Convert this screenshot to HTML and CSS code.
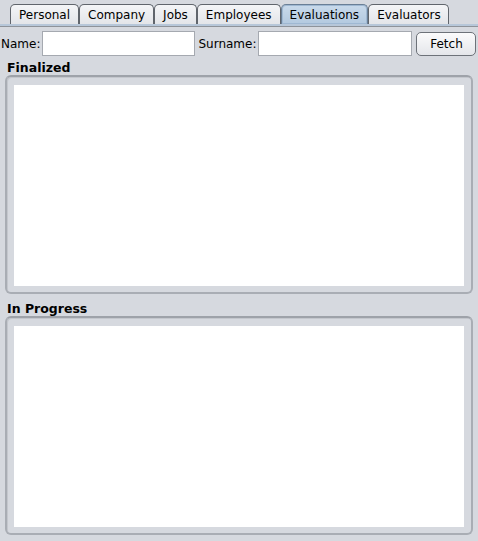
FILE: index.html
```
<!DOCTYPE html>
<html>
<head>
<meta charset="utf-8">
<link rel="stylesheet" href="styles.css">
</head>
<body>
<div class="tabs">
  <div class="tab">Personal</div>
  <div class="tab">Company</div>
  <div class="tab">Jobs</div>
  <div class="tab">Employees</div>
  <div class="tab selected">Evaluations</div>
  <div class="tab">Evaluators</div>
</div>
<div class="content">
  <div class="search">
    <span class="lbl">Name:</span>
    <input class="field name" type="text">
    <span class="lbl surname-lbl">Surname:</span>
    <input class="field surname" type="text">
    <button class="btn">Fetch</button>
  </div>
  <div class="section-title">Finalized</div>
  <div class="panel"><div class="list"></div></div>
  <div class="section-title second">In Progress</div>
  <div class="panel"><div class="list"></div></div>
</div>
</body>
</html>
```
FILE: styles.css
```
html, body {
  margin: 0;
  padding: 0;
  background: #d6d9df;
  font-family: "DejaVu Sans", sans-serif;
  font-size: 12px;
  color: #000;
  width: 478px;
  height: 541px;
  overflow: hidden;
}
.tabs {
  display: flex;
  padding: 4px 0 0 10px;
  gap: 0;
  border-bottom: 2px solid #b7c7d9;
  box-shadow: 0 1px 0 #8e939a;
}
.tab {
  height: 20px;
  box-sizing: border-box;
  padding: 0 8px;
  border: 1px solid #60656c;
  border-bottom: none;
  border-radius: 5px 5px 0 0;
  background: linear-gradient(#f4f5f7, #e3e5e9);
  line-height: 20px;
  display: flex;
  align-items: center;
}
.tab.selected {
  background: linear-gradient(#c9daeb, #b3c9df);
  border-color: #6a7f96;
  box-shadow: inset 0 0 0 1px #9fb8d2;
}
.tab:last-child {
  padding-right: 7px;
}
.content {
  padding: 5px 0 0 0;
}
.search {
  display: flex;
  align-items: center;
  height: 25px;
}
.lbl {
  padding-left: 1px;
  margin-right: 2px;
}
.surname-lbl {
  margin-left: 2px;
}
.field {
  box-sizing: border-box;
  height: 25px;
  border: 1px solid #a5a9b0;
  background: #fff;
  margin: 0;
  padding: 0 3px;
  font: inherit;
}
.field.name { width: 153px; }
.field.surname { width: 154px; }
.btn {
  box-sizing: border-box;
  margin-left: 4px;
  width: 60px;
  height: 24px;
  border: 1px solid #6d7279;
  border-radius: 5px;
  background: linear-gradient(#fbfbfc, #e4e6ea);
  font: inherit;
  padding: 0;
  color: #000;
}
.section-title {
  font-weight: bold;
  font-size: 12.5px;
  padding: 4px 0 0 7px;
  height: 15px;
  line-height: 15px;
}
.section-title.second {
  padding-top: 7px;
}
.panel {
  margin: 0 5px 0 5px;
  height: 219px;
  box-sizing: border-box;
  border: 2px solid #a9adb4;
  border-top-color: #9ea2a9;
  border-radius: 6px;
  padding: 8px 7px 6px 7px;
  box-shadow: inset 1px 1px 0 #c4c7cd;
}
.list {
  background: #fff;
  height: 100%;
}
```
